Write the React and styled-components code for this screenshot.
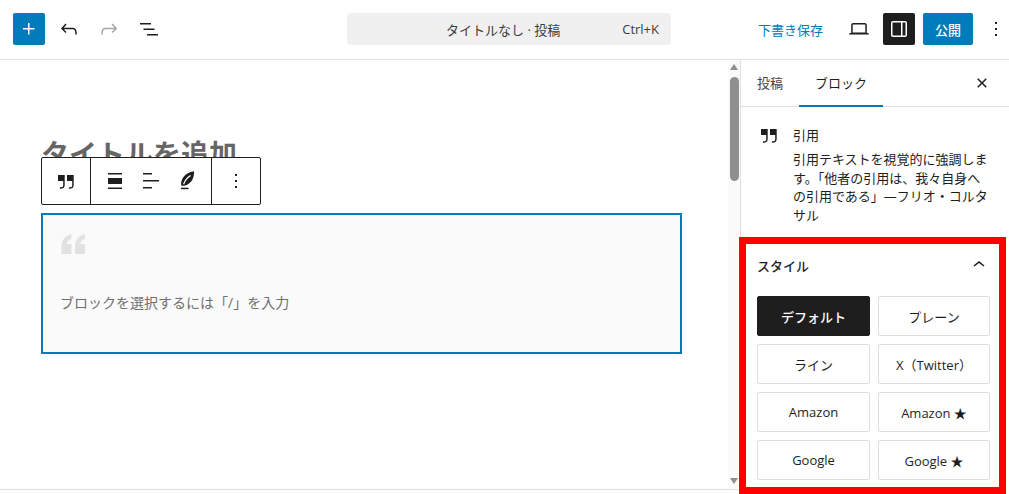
import React from 'react';
import styled, { createGlobalStyle } from 'styled-components';

const GlobalStyle = createGlobalStyle`
  html, body { margin: 0; padding: 0; background: #fff; }
  body {
    font-family: "Open Sans", "Noto Sans CJK JP", sans-serif;
    font-size: 13px;
    color: #1e1e1e;
  }
  * { box-sizing: border-box; }
`;

// wordpress icon paths
const paths = {
  plus: 'M11 12.5V17.5H12.5V12.5H17.5V11H12.5V6H11V11H6V12.5H11Z',
  undo: 'M18.3 11.7c-.6-.6-1.4-.9-2.3-.9H6.7l2.9-3.3-1.1-1-4.5 5L8.5 16l1-1-2.7-2.7H16c.5 0 .9.2 1.3.5 1 1 1 3.4 1 4.5v.3h1.5v-.2c0-1.5 0-4.3-1.5-5.7z',
  redo: 'M15.6 6.5l-1.1 1 2.9 3.3H8c-.9 0-1.7.3-2.3.9-1.4 1.5-1.4 4.2-1.4 5.6v.2h1.5v-.3c0-1.1 0-3.5 1-4.5.3-.3.7-.5 1.3-.5h9.2L14.5 15l1.1 1.1 4.6-4.6-4.6-5z',
  list: 'M3 6h11v1.5H3V6Zm3.5 5.5h11V13h-11v-1.5ZM21 17H10v1.5h11V17Z',
  close: 'M12 13.06l3.712 3.713 1.061-1.06L13.061 12l3.712-3.712-1.06-1.06L12 10.938 8.288 7.227l-1.061 1.06L10.939 12l-3.712 3.712 1.06 1.061L12 13.061z',
  desktop: 'M20.5 16h-.7V8c0-1.1-.9-2-2-2H6.2c-1.1 0-2 .9-2 2v8h-.7c-.8 0-1.5.7-1.5 1.5h20c0-.8-.7-1.5-1.5-1.5zM5.7 8c0-.3.2-.5.5-.5h11.6c.3 0 .5.2.5.5v7.6H5.7V8z',
  drawer: 'M18 4H6c-1.1 0-2 .9-2 2v12c0 1.1.9 2 2 2h12c1.1 0 2-.9 2-2V6c0-1.1-.9-2-2-2zm-4 14.5H6c-.3 0-.5-.2-.5-.5V6c0-.3.2-.5.5-.5h8v13zm4.5-.5c0 .3-.2.5-.5.5h-2.5v-13H18c.3 0 .5.2.5.5v12z',
  more: 'M13 19h-2v-2h2v2zm0-6h-2v-2h2v2zm0-6h-2V5h2v2z',
  chevronUp: 'M6.5 12.4L12 8l5.5 4.4-.9 1.2L12 10l-4.5 3.6-1-1.2z',
  quote: 'M13 6v6h5.2v4c0 .8-.2 1.4-.5 1.7-.6.6-1.6.6-2.5.5h-.3v1.5h.5c1 0 2.3-.1 3.3-1 .6-.6 1-1.6 1-2.8V6H13zm-9 6h5.2v4c0 .8-.2 1.4-.5 1.7-.6.6-1.6.6-2.5.5h-.3v1.5h.5c1 0 2.3-.1 3.3-1 .6-.6 1-1.6 1-2.8V6H4v6z',
  alignNone: 'M19 5.5H5V4h14v1.5ZM19 20H5v-1.5h14V20ZM5 9h14v6H5V9Z',
  alignLeft: 'M13 5.5H4V4h9v1.500Zm7 7H4V11h16v1.500Zm-7 7H4V18h9v1.500Z',
};

const Icon = ({ name, color = '#1e1e1e', size = 24 }) => (
  <svg width={size} height={size} viewBox="0 0 24 24" fill={color} aria-hidden="true">
    <path d={paths[name]} />
  </svg>
);

const FeatherIcon = () => (
  <svg width="24" height="24" viewBox="0 0 24 24" aria-hidden="true">
    <path fill="#1e1e1e" d="M6.300 16.800C5.200 10.500 9.500 3.500 19 2.200c.4 6.300-2.300 12.600-9.700 14.600z" />
    <path fill="none" stroke="#fff" strokeWidth="1.200" d="M8.600 15.200c1.200-3.700 3.500-6.600 7-8.800" />
    <path fill="#1e1e1e" d="M6 18.700h7.500v1.500H6z" />
  </svg>
);

const Page = styled.div`
  position: relative;
  width: 1009px;
  height: 494px;
  overflow: hidden;
  display: flex;
  flex-direction: column;
`;

const Header = styled.header`
  height: 60px;
  flex: none;
  display: flex;
  align-items: center;
  border-bottom: 1px solid #e0e0e0;
  padding: 0 0 1px 13px;
`;

const LeftTools = styled.div`
  display: flex;
  align-items: center;
  gap: 8px;
  width: 334px;
`;

const IconButton = styled.button`
  width: 32px;
  height: 32px;
  padding: 0;
  margin-right: ${(p) => p.$mr || 0}px;
  border: 0;
  border-radius: 2px;
  display: flex;
  align-items: center;
  justify-content: center;
  background: ${(p) => p.$bg || 'transparent'};
`;

const CommandBar = styled.div`
  width: 324px;
  height: 32px;
  background: #f0f0f0;
  border-radius: 4px;
  display: flex;
  align-items: center;
  padding: 0 12px 0 99px;
  justify-content: space-between;
  color: #3c3c3c;
`;

const RightTools = styled.div`
  display: flex;
  align-items: center;
  margin-left: 87px;
`;

const SaveDraft = styled.span`
  color: #007cba;
  width: 85px;
`;

const Publish = styled.button`
  width: 50px;
  height: 32px;
  margin: 0 11px 0 8px;
  border: 0;
  border-radius: 2px;
  background: #007cba;
  color: #fff;
  font: 500 13px "Open Sans", "Noto Sans CJK JP", sans-serif;
  padding: 0;
`;

const Kebab = styled.span`
  display: flex;
  width: 24px;
  justify-content: center;
`;

const Body = styled.div`
  flex: 1;
  display: flex;
  min-height: 0;
`;

const EditorArea = styled.main`
  position: relative;
  width: 728px;
  height: 430px;
  border-bottom: 1px solid #e0e0e0;
  padding: 74px 0 0 41px;
`;

const PostTitle = styled.h1`
  margin: 0 0 39px;
  font-size: 28px;
  line-height: 40px;
  height: 40px;
  font-weight: 700;
  color: #666;
`;

const BlockToolbar = styled.div`
  position: absolute;
  left: 41px;
  top: 97px;
  width: 220px;
  height: 48px;
  background: #fff;
  border: 1px solid #1e1e1e;
  border-radius: 2px;
  display: flex;
`;

const ToolbarGroup = styled.div`
  width: ${(p) => p.$width}px;
  display: flex;
  align-items: center;
  justify-content: center;
  gap: ${(p) => p.$gap || 0}px;
  border-right: ${(p) => (p.$last ? '0' : '1px solid #1e1e1e')};
`;

const QuoteBlock = styled.div`
  width: 641px;
  height: 141px;
  border: 2px solid #007cba;
  background: #fafafa;
  padding: 18px 17px 0;
`;

const QuoteMark = styled.svg`
  display: block;
  width: 26px;
  height: 22px;
  fill: #e2e2e2;
`;

const Placeholder = styled.p`
  margin: 38px 0 0;
  font-size: 14px;
  line-height: 20px;
  color: #6f6f6f;
`;

const Scrollbar = styled.div`
  width: 12px;
  height: 430px;
  background: #fafafa;
  display: flex;
  flex-direction: column;
  align-items: center;
  padding-top: 4px;
  border-bottom: 1px solid #e0e0e0;
`;

const Arrow = styled.span`
  flex: none;
  width: 0;
  height: 0;
  border-left: 4.5px solid transparent;
  border-right: 4.5px solid transparent;
  ${(p) => (p.$up ? 'border-bottom: 6px solid #8f8f8f;' : 'border-top: 6px solid #8f8f8f;')}
`;

const Thumb = styled.div`
  flex: none;
  width: 9px;
  height: 104px;
  margin: 7px 0 297px;
  background: #8f8f8f;
  border-radius: 5px;
`;

const Sidebar = styled.aside`
  width: 269px;
  border-left: 1px solid #e0e0e0;
  display: flex;
  flex-direction: column;
`;

const Tabs = styled.div`
  height: 47px;
  flex: none;
  display: flex;
  align-items: stretch;
  border-bottom: 1px solid #e0e0e0;
  padding-right: 15px;
`;

const Tab = styled.div`
  width: ${(p) => p.$width}px;
  display: flex;
  align-items: center;
  justify-content: center;
  margin-bottom: -1px;
  color: ${(p) => (p.$active ? '#1e1e1e' : '#444')};
  border-bottom: 2px solid ${(p) => (p.$active ? '#007cba' : 'transparent')};
`;

const CloseBox = styled.div`
  margin-left: auto;
  display: flex;
  align-items: center;
`;

const BlockCard = styled.section`
  height: 130px;
  flex: none;
  display: flex;
  padding: 16px 15px 0 16px;
  gap: 12px;
`;

const CardBody = styled.div`
  width: 198px;
`;

const CardTitle = styled.div`
  line-height: 24px;
  margin-bottom: 3px;
`;

const CardText = styled.p`
  margin: 0;
  line-height: 18.7px;
  color: #1e1e1e;
`;

const StylePanel = styled.section`
  padding: 16px 19px 0 16px;
`;

const PanelHead = styled.div`
  display: flex;
  align-items: center;
  justify-content: space-between;
  height: 24px;
  margin-bottom: 19px;
  font-weight: 500;
`;

const ChevronBox = styled.span`
  display: flex;
  margin-right: -1px;
`;

const StyleGrid = styled.div`
  display: grid;
  grid-template-columns: 113px 112px;
  grid-auto-rows: 40px;
  column-gap: 8px;
  row-gap: 8px;
`;

const StyleButton = styled.div`
  display: flex;
  align-items: center;
  justify-content: center;
  border-radius: 2px;
  border: 1px solid ${(p) => (p.$active ? '#1e1e1e' : '#ddd')};
  background: ${(p) => (p.$active ? '#1e1e1e' : '#fff')};
  color: ${(p) => (p.$active ? '#fff' : '#1e1e1e')};
  font-weight: ${(p) => (p.$active ? 500 : 400)};
`;

// red annotation on top of the screenshot
const Highlight = styled.div`
  position: absolute;
  left: 739px;
  top: 237px;
  width: 267px;
  height: 257px;
  border: 7px solid #f00;
  pointer-events: none;
`;

const styleNames = ['デフォルト', 'プレーン', 'ライン', 'X（Twitter）', 'Amazon', 'Amazon ★', 'Google', 'Google ★'];

export default function App() {
  return (
    <Page>
      <GlobalStyle />
      <Header>
        <LeftTools>
          <IconButton $bg="#007cba"><Icon name="plus" color="#fff" /></IconButton>
          <IconButton><Icon name="undo" /></IconButton>
          <IconButton><Icon name="redo" color="#a6a6a6" /></IconButton>
          <IconButton><Icon name="list" /></IconButton>
        </LeftTools>
        <CommandBar>
          <span>タイトルなし · 投稿</span>
          <span>Ctrl+K</span>
        </CommandBar>
        <RightTools>
          <SaveDraft>下書き保存</SaveDraft>
          <IconButton $mr={8}><Icon name="desktop" /></IconButton>
          <IconButton $bg="#1e1e1e"><Icon name="drawer" color="#fff" /></IconButton>
          <Publish>公開</Publish>
          <Kebab><Icon name="more" /></Kebab>
        </RightTools>
      </Header>
      <Body>
        <EditorArea>
          <PostTitle>タイトルを追加</PostTitle>
          <BlockToolbar>
            <ToolbarGroup $width={49}><Icon name="quote" /></ToolbarGroup>
            <ToolbarGroup $width={121} $gap={12}>
              <Icon name="alignNone" />
              <Icon name="alignLeft" />
              <FeatherIcon />
            </ToolbarGroup>
            <ToolbarGroup $width={48} $last><Icon name="more" /></ToolbarGroup>
          </BlockToolbar>
          <QuoteBlock>
            <QuoteMark viewBox="0 0 26 22">
              <path d="M11.500 1C5.500 2.500 1.500 7 1.500 13v8h10v-10H7c0-2.500 1.800-4.300 4.500-5.200zM25 1c-6 1.500-10 6-10 12v8h10v-10h-4.500c0-2.500 1.800-4.300 4.500-5.200z" />
            </QuoteMark>
            <Placeholder>ブロックを選択するには「/」を入力</Placeholder>
          </QuoteBlock>
        </EditorArea>
        <Scrollbar>
          <Arrow $up />
          <Thumb />
          <Arrow />
        </Scrollbar>
        <Sidebar>
          <Tabs>
            <Tab $width={58}>投稿</Tab>
            <Tab $width={84} $active>ブロック</Tab>
            <CloseBox><Icon name="close" size={24} /></CloseBox>
          </Tabs>
          <BlockCard>
            <Icon name="quote" />
            <CardBody>
              <CardTitle>引用</CardTitle>
              <CardText>引用テキストを視覚的に強調します。「他者の引用は、我々自身への引用である」—フリオ・コルタサル</CardText>
            </CardBody>
          </BlockCard>
          <StylePanel>
            <PanelHead>
              スタイル
              <ChevronBox><Icon name="chevronUp" /></ChevronBox>
            </PanelHead>
            <StyleGrid>
              {styleNames.map((name, i) => (
                <StyleButton key={name} $active={i === 0}>{name}</StyleButton>
              ))}
            </StyleGrid>
          </StylePanel>
        </Sidebar>
      </Body>
      <Highlight />
    </Page>
  );
}
